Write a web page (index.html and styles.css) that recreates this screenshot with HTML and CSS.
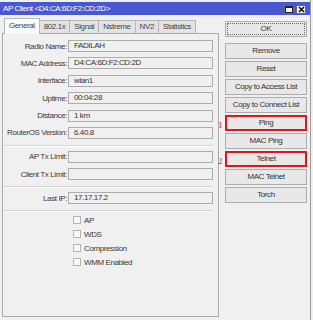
FILE: index.html
```html
<!DOCTYPE html>
<html lang="en">
<head>
    <meta charset="UTF-8">
    <meta name="viewport" content="width=device-width, initial-scale=1.0">
    <title>AP Client</title>
    <link rel="stylesheet" href="styles.css">
</head>
<body>
    <div class="window">
        <div class="titlebar">
            <span class="title">AP Client &lt;D4:CA:6D:F2:CD:2D&gt;</span>
            <span class="tb-btns">
                <span class="tb-btn">
                    <svg width="8" height="7" viewBox="0 0 8 7"><rect x="0.5" y="0.5" width="7" height="6" fill="none" stroke="#222"/><line x1="0" y1="1.5" x2="8" y2="1.5" stroke="#222"/></svg>
                </span>
                <span class="tb-btn">
                    <svg width="7" height="7" viewBox="0 0 7 7"><path d="M1 1 L6 6 M6 1 L1 6" stroke="#111" stroke-width="1.6"/></svg>
                </span>
            </span>
        </div>

        <div class="main">
            <div class="left">
                <div class="tabs">
                    <div class="tab active">General</div>
                    <div class="tab">802.1x</div>
                    <div class="tab">Signal</div>
                    <div class="tab">Nstreme</div>
                    <div class="tab">NV2</div>
                    <div class="tab">Statistics</div>
                </div>

                <div class="panel">
                    <div class="row"><label>Radio Name:</label><div class="field">FADILAH</div></div>
                    <div class="row"><label>MAC Address:</label><div class="field">D4:CA:6D:F2:CD:2D</div></div>
                    <div class="row"><label>Interface:</label><div class="field">wlan1</div></div>
                    <div class="row"><label>Uptime:</label><div class="field">00:04:28</div></div>
                    <div class="row"><label>Distance:</label><div class="field">1 km</div></div>
                    <div class="row"><label>RouterOS Version:</label><div class="field">6.40.8</div></div>

                    <div class="sep"></div>

                    <div class="row"><label>AP Tx Limit:</label><div class="field"></div></div>
                    <div class="row"><label>Client Tx Limit:</label><div class="field"></div></div>

                    <div class="sep"></div>

                    <div class="row"><label>Last IP:</label><div class="field">17.17.17.2</div></div>

                    <div class="sep"></div>

                    <div class="check"><span class="box"></span>AP</div>
                    <div class="check"><span class="box"></span>WDS</div>
                    <div class="check"><span class="box"></span>Compression</div>
                    <div class="check"><span class="box"></span>WMM Enabled</div>
                </div>
            </div>

            <div class="buttons">
                <div class="btn ok">OK</div>
                <div class="btn">Remove</div>
                <div class="btn">Reset</div>
                <div class="btn">Copy to Access List</div>
                <div class="btn">Copy to Connect List</div>
                <div class="btn marked"><span class="mark">1</span>Ping</div>
                <div class="btn">MAC Ping</div>
                <div class="btn marked"><span class="mark">2</span>Telnet</div>
                <div class="btn">MAC Telnet</div>
                <div class="btn">Torch</div>
            </div>
        </div>
    </div>
</body>
</html>
```

FILE: styles.css
```css
* {
    margin: 0;
    padding: 0;
    box-sizing: border-box;
}

body {
    width: 313px;
    height: 320px;
    overflow: hidden;
    background: #f0f0f0;
    font-family: 'Liberation Sans', Arial, sans-serif;
    font-size: 8px;
    letter-spacing: -0.4px;
    color: #333;
}

.window {
    width: 311px;
    height: 320px;
    padding-top: 2px;
    border-right: 1px solid #9c9c9c;
}

/* Barre de titre */
.titlebar {
    height: 13px;
    background: #4a57d3;
    color: #fff;
    display: flex;
    align-items: center;
    justify-content: space-between;
    padding: 0 4px 0 3px;
}

.tb-btns {
    display: flex;
    gap: 2px;
    align-self: flex-end;
    margin-bottom: 1px;
}

.tb-btn {
    width: 10px;
    height: 9px;
    background: #f2f2f2;
    border: 1px solid #6a6a6a;
    display: flex;
    align-items: center;
    justify-content: center;
}

.main {
    display: flex;
    padding-top: 3px;
}

.left {
    width: 217px;
    margin-left: 2px;
}

/* Onglets */
.tabs {
    display: flex;
    align-items: flex-end;
    height: 15px;
    padding-left: 2px;
}

.tab {
    height: 13px;
    padding: 0 4px;
    line-height: 12px;
    background: #e3e3e3;
    border: 1px solid #b6b6b6;
    border-bottom: none;
    margin-right: -1px;
    color: #444;
}

.tab.active {
    position: relative;
    z-index: 1;
    height: 16px;
    line-height: 14px;
    margin-bottom: -1px;
    background: #fafafa;
}

.panel {
    height: 284px;
    border: 1px solid #a9a9a9;
    background: #f0f0f0;
    padding-top: 6px;
}

.row {
    display: flex;
    align-items: center;
    height: 12px;
}

.row + .row {
    margin-top: 5.4px;
}

.row label {
    flex: none;
    display: flex;
    justify-content: flex-end;
    width: 65px;
    padding-right: 1px;
    white-space: nowrap;
    color: #3a3a3a;
}

.field {
    flex: none;
    width: 145px;
    height: 12px;
    border: 1px solid #acacac;
    background: #f0f0f0;
    padding-left: 5px;
    line-height: 10px;
    color: #333;
}

.sep {
    width: 210px;
    height: 2px;
    border-top: 1px solid #d6d6d6;
    border-bottom: 1px solid #fff;
    margin: 6px 0 4px;
}

.check {
    display: flex;
    align-items: center;
    gap: 3px;
    height: 8px;
    margin-left: 70px;
    color: #3a3a3a;
}

.check + .check {
    margin-top: 6px;
}

.box {
    width: 8px;
    height: 8px;
    border: 1px solid #b3b3b3;
    background: #f7f7f7;
}

/* Boutons */
.buttons {
    width: 82px;
    margin-left: 6px;
    padding-top: 3px;
    display: flex;
    flex-direction: column;
    gap: 2px;
}

.btn {
    position: relative;
    height: 16px;
    line-height: 14px;
    text-align: center;
    background: #e8e8e8;
    border: 1px solid #adadad;
    color: #333;
    white-space: nowrap;
}

.btn.ok {
    margin-bottom: 4px;
    outline: 1px dotted #666;
    outline-offset: -3px;
}

.btn.marked {
    border: 2px solid #e3141c;
    line-height: 12px;
}

.mark {
    position: absolute;
    left: -9px;
    top: 2px;
    font-family: 'Liberation Serif', serif;
    font-size: 9px;
    color: #e0262b;
}
```
